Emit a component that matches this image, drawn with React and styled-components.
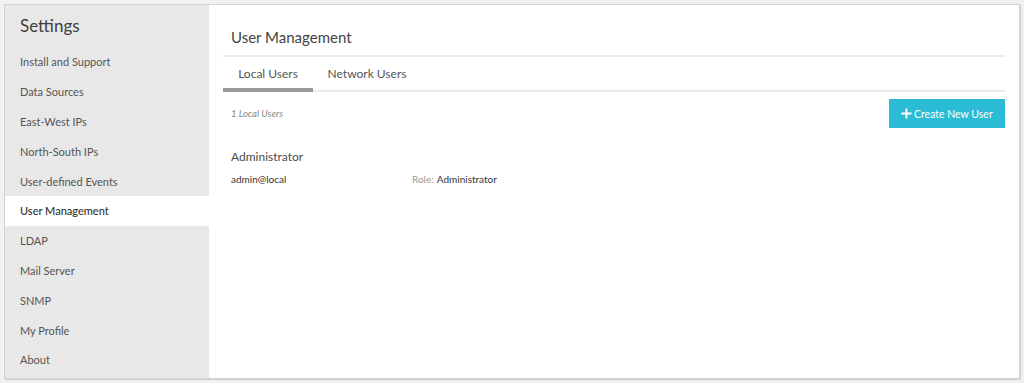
import React from 'react';
import styled, { createGlobalStyle } from 'styled-components';

// ─────────────────────────────────────────────────────────────────────────────
// global
// ─────────────────────────────────────────────────────────────────────────────

const GlobalStyle = createGlobalStyle`
  html, body {
    margin: 0;
    padding: 0;
    background: #f1f1f1;
    font-family: Lato, "Open Sans", "Liberation Sans", sans-serif;
    color: #444;
  }
`;

const Page = styled.div`
  padding: 4px;
  height: 383px;
  box-sizing: border-box;
`;

const Frame = styled.div`
  display: flex;
  width: 1016px;
  height: 375px;
  box-sizing: border-box;
  border: 1px solid #d2d2d2;
  box-shadow: 1px 1px 1px rgba(0, 0, 0, 0.12);
  background: #fff;
`;

// ─────────────────────────────────────────────────────────────────────────────
// sidebar
// ─────────────────────────────────────────────────────────────────────────────

const Sidebar = styled.nav`
  width: 204px;
  flex-shrink: 0;
  background: #e8e8e8;
  display: flex;
  flex-direction: column;
`;

const SideTitle = styled.h2`
  margin: 0;
  padding: 10px 0 0 15px;
  height: 42px;
  box-sizing: border-box;
  font-size: 17px;
  font-weight: 400;
  color: #3f3f3f;
`;

const NavItem = styled.a`
  display: flex;
  align-items: center;
  height: 29.8px;
  padding-left: 15px;
  font-size: 11px;
  color: #555;
  background: ${(p) => (p.$active ? '#fff' : 'transparent')};
  ${(p) => p.$active && 'color: #333; font-weight: 500;'}
`;

// ─────────────────────────────────────────────────────────────────────────────
// main
// ─────────────────────────────────────────────────────────────────────────────

const Main = styled.main`
  flex: 1;
  padding: 23px 14px 0 14px;
`;

const Title = styled.h1`
  margin: 0;
  padding: 0 0 9px 8px;
  font-size: 15px;
  font-weight: 400;
  color: #444;
  border-bottom: 2px solid #ebebeb;
`;

const Tabs = styled.div`
  display: flex;
  border-bottom: 2px solid #ebebeb;
`;

const Tab = styled.div`
  width: ${(p) => p.$w}px;
  box-sizing: border-box;
  padding: 9px 0 7px;
  text-align: center;
  font-size: 12px;
  color: #555;
  margin-bottom: -2px;
  border-bottom: 4px solid ${(p) => (p.$active ? '#999' : 'transparent')};
`;

const Toolbar = styled.div`
  display: flex;
  justify-content: space-between;
  align-items: center;
  padding: 7px 0 0 8px;
`;

const Count = styled.span`
  font-size: 9.5px;
  font-style: italic;
  color: #888;
`;

const CreateButton = styled.button`
  display: flex;
  align-items: center;
  gap: 2px;
  height: 29px;
  width: 116px;
  padding: 0 0 0 12px;
  border: none;
  background: #2abcd4;
  color: #fff;
  font-family: inherit;
  font-size: 10.5px;
  cursor: pointer;
`;

const UserCard = styled.div`
  padding: 21px 0 0 8px;
`;

const UserName = styled.div`
  font-size: 12px;
  color: #4a4a4a;
`;

const UserRow = styled.div`
  display: flex;
  margin-top: 9px;
  font-size: 10px;
  color: #333;
`;

const Email = styled.span`
  width: 181px;
`;

const Label = styled.span`
  color: #999;
  margin-right: 3px;
`;

const Plus = () => (
  <svg width="11" height="11" viewBox="0 0 11 11">
    <path d="M5.5 0.5v10M0.5 5.5h10" stroke="#fff" strokeWidth="1.8" />
  </svg>
);

const navItems = [
  'Install and Support',
  'Data Sources',
  'East-West IPs',
  'North-South IPs',
  'User-defined Events',
  'User Management',
  'LDAP',
  'Mail Server',
  'SNMP',
  'My Profile',
  'About',
];

export default function App() {
  return (
    <Page>
      <GlobalStyle />
      <Frame>
        <Sidebar>
          <SideTitle>Settings</SideTitle>
          {navItems.map((n) => (
            <NavItem key={n} $active={n === 'User Management'}>
              {n}
            </NavItem>
          ))}
        </Sidebar>
        <Main>
          <Title>User Management</Title>
          <Tabs>
            <Tab $w={90} $active>
              Local Users
            </Tab>
            <Tab $w={108}>Network Users</Tab>
          </Tabs>
          <Toolbar>
            <Count>1 Local Users</Count>
            <CreateButton>
              <Plus />
              Create New User
            </CreateButton>
          </Toolbar>
          <UserCard>
            <UserName>Administrator</UserName>
            <UserRow>
              <Email>admin@local</Email>
              <Label>Role:</Label>
              Administrator
            </UserRow>
          </UserCard>
        </Main>
      </Frame>
    </Page>
  );
}
